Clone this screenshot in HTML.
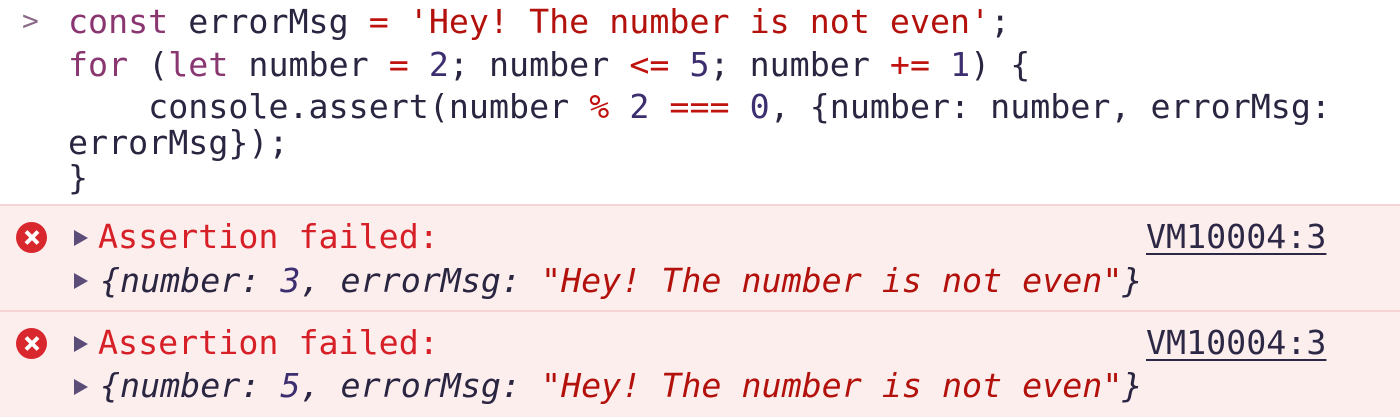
<!DOCTYPE html>
<html><head><meta charset="utf-8"><style>
html,body{margin:0;padding:0;background:#fff;width:1400px;height:417px;overflow:hidden}
body{position:relative;font-family:"DejaVu Sans Mono","Liberation Mono",monospace;font-size:33.3px}
.l{position:absolute;white-space:pre;line-height:40px;height:40px}
.k{color:#8a3670}.i{color:#2a2540}.o{color:#c0120f}.s{color:#b3110c}.n{color:#3d2e70}
.row{position:absolute;left:0;width:1400px;background:#fdeeee;border-top:2px solid #f6d3d4}
.err{color:#d61f26}
.ic{position:absolute;left:16px;width:31px;height:31px;border-radius:50%;background:#d9272e}
.ic:before,.ic:after{content:"";position:absolute;left:13.5px;top:7px;width:4px;height:17px;background:#fff;transform:rotate(45deg)}
.ic:after{transform:rotate(-45deg)}
.tri{position:absolute;width:0;height:0;border-top:8px solid transparent;border-bottom:8px solid transparent;border-left:14px solid #5b4d78}
.obj{font-style:italic;color:#2a2540}
.vm{color:#2d2845;text-decoration:underline;text-decoration-thickness:2px;text-underline-offset:5px}
</style></head><body>
<div class="l" style="left:22px;top:1px;color:#8a6a88;font-size:28px">&gt;</div>
<div class="l" style="left:68px;top:2px"><span class="k">const</span><span class="i"> errorMsg </span><span class="o">=</span><span class="s"> 'Hey! The number is not even'</span><span class="i">;</span></div>
<div class="l" style="left:68px;top:45px"><span class="k">for</span><span class="i"> (</span><span class="k">let</span><span class="i"> number </span><span class="o">=</span> <span class="n">2</span><span class="i">; number </span><span class="o">&lt;=</span> <span class="n">5</span><span class="i">; number </span><span class="o">+=</span> <span class="n">1</span><span class="i">) {</span></div>
<div class="l i" style="left:68px;top:87px">    console.assert(number <span class="o">%</span> <span class="n">2</span> <span class="o">===</span> <span class="n">0</span>, {number: number, errorMsg:</div>
<div class="l i" style="left:68px;top:123px">errorMsg});</div>
<div class="l i" style="left:68px;top:158px">}</div>

<div class="row" style="top:204px;height:105px">
  <div class="ic" style="top:16px"></div>
  <div class="tri" style="left:74px;top:24px"></div>
  <div class="l err" style="left:98px;top:11px">Assertion failed:</div>
  <div class="l vm" style="left:1146px;top:11px">VM10004:3</div>
  <div class="tri" style="left:74px;top:67px"></div>
  <div class="l obj" style="left:100px;top:55px">{number: <span class="n">3</span>, errorMsg: <span class="s">"Hey! The number is not even"</span>}</div>
</div>
<div class="row" style="top:310px;height:107px">
  <div class="ic" style="top:16px"></div>
  <div class="tri" style="left:74px;top:24px"></div>
  <div class="l err" style="left:98px;top:11px">Assertion failed:</div>
  <div class="l vm" style="left:1146px;top:11px">VM10004:3</div>
  <div class="tri" style="left:74px;top:67px"></div>
  <div class="l obj" style="left:100px;top:54px">{number: <span class="n">5</span>, errorMsg: <span class="s">"Hey! The number is not even"</span>}</div>
</div>
</body></html>
